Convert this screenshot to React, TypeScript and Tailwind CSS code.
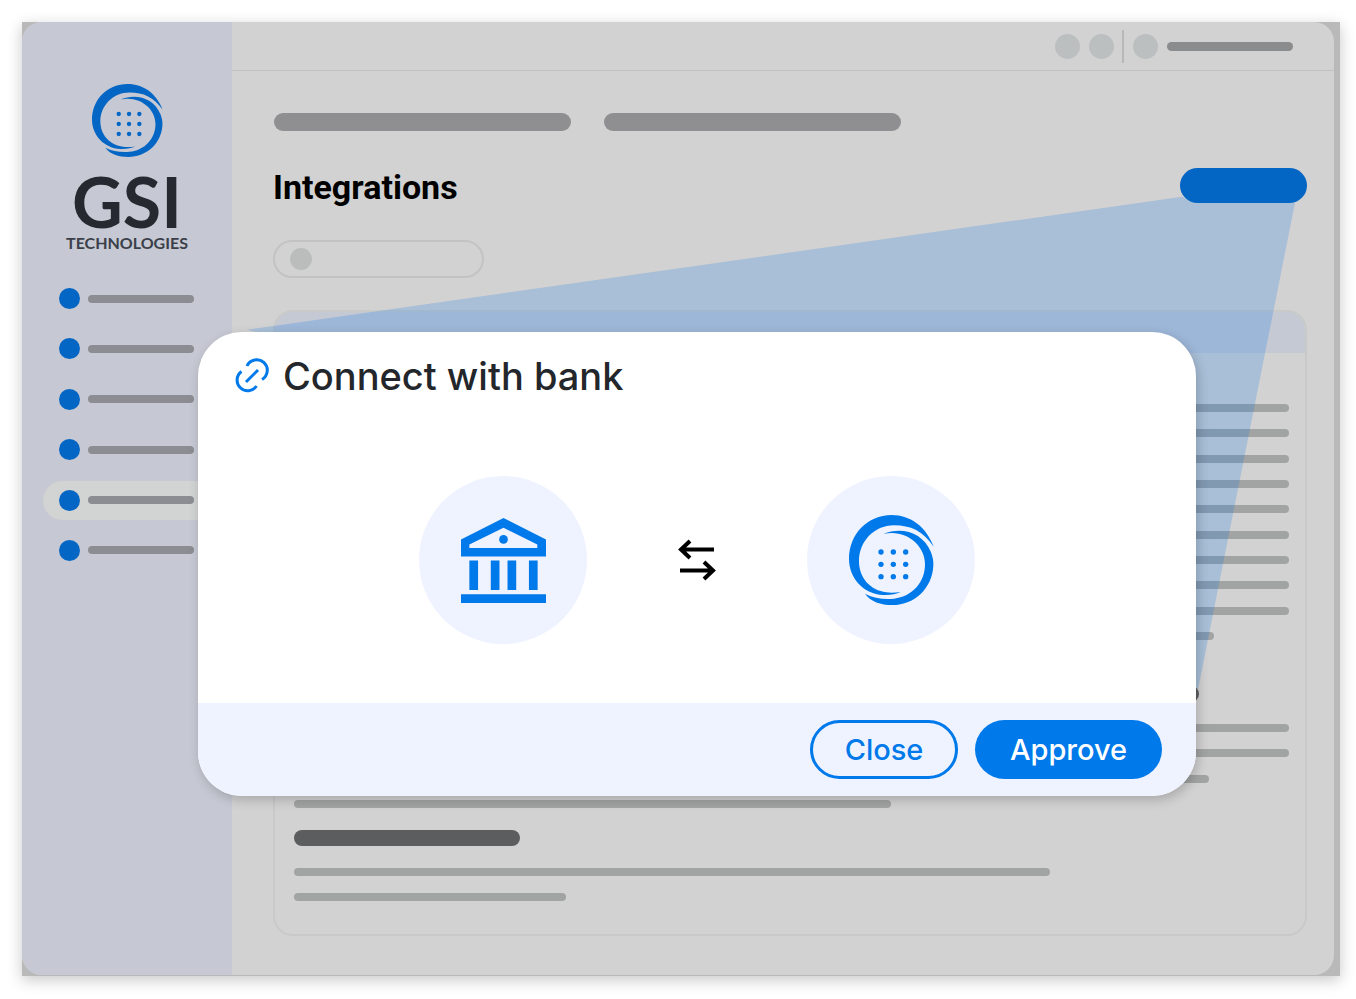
import React from 'react';

const SwirlLogo: React.FC<{ className?: string }> = ({ className }) => (
  <svg viewBox="0 0 255 270" preserveAspectRatio="none" fill="currentColor" className={className} aria-hidden="true">
    <path d="M254 95C232 36 185 0 128 0C55 0 0 58 0 132C0 190 45 238 102 240C122 241 142 238 155 231C140 233 125 234 112 232C65 226 30 190 30 138C30 80 75 31 135 31C185 31 222 48 254 95Z" />
    <path d="M103 57C158 34 222 52 246 112C251 126 254 138 253 152C250 218 198 270 130 270C95 270 65 260 48 236C75 250 105 254 135 251C190 245 228 202 228 148C228 90 170 42 103 57Z" />
    {[111, 148, 185].map((y) =>
      [96, 133, 170].map((x) => <circle key={`${x}-${y}`} cx={x} cy={y} r="8" />)
    )}
  </svg>
);

const BankIcon: React.FC<{ className?: string }> = ({ className }) => (
  <svg viewBox="0 0 254 254" fill="currentColor" className={className} aria-hidden="true">
    <path fillRule="evenodd" d="M0 64L127 0L254 64V115H0ZM25 90H228V79L127 29L25 79Z" />
    <circle cx="127" cy="64" r="13" />
    <path d="M25 127H51V215H25ZM89 127H115V215H89ZM139 127H165V215H139ZM203 127H229V215H203ZM0 228H254V254H0Z" />
  </svg>
);

const LinkIcon: React.FC<{ className?: string }> = ({ className }) => (
  <svg viewBox="0 0 36 36" fill="none" stroke="currentColor" strokeWidth="3" className={className} aria-hidden="true">
    <path d="M13 8A10.6 10.6 0 1 1 28 21.5" />
    <path d="M22.5 28A10.6 10.6 0 1 1 7.5 13.5" />
    <path d="M12 24L24 12" />
  </svg>
);

const SwapIcon: React.FC<{ className?: string }> = ({ className }) => (
  <svg viewBox="0 0 38 42" fill="none" stroke="currentColor" strokeWidth="4" className={className} aria-hidden="true">
    <path d="M36 10.5H3M12 2L3 10.5L12 19" />
    <path d="M2 31.5H35M26 23L35 31.5L26 40" />
  </svg>
);

const TextLine: React.FC<{ width?: string }> = ({ width = 'w-full' }) => (
  <div className={`h-2 rounded-full bg-[#a2a3a3] ${width}`}></div>
);

const Sidebar: React.FC = () => (
  <aside className="w-[210px] shrink-0 bg-[#c6c9d3] pt-[62px]">
    <div className="flex flex-col items-center">
      <SwirlLogo className="w-[71px] h-[73px] text-[#0466c4]" />
      <div className="mt-[10px] font-['Lato',sans-serif] font-bold text-[70px] leading-[68px] text-[#262a30]">GSI</div>
      <div className="font-['Lato',sans-serif] font-bold text-base leading-4 text-[#3b3f4a]">TECHNOLOGIES</div>
    </div>

    <nav className="mt-7 ml-[21px] h-[291px] flex flex-col justify-between">
      {[0, 1, 2, 3, 4, 5].map((i) => (
        <a
          key={i}
          href="#"
          aria-label={`Menu item ${i + 1}`}
          className={`h-[39px] pl-4 flex items-center gap-2 rounded-l-full ${i === 4 ? 'bg-[#d2d3d3]' : ''}`}
        >
          <span className="w-[21px] h-[21px] rounded-full bg-[#0466c4]"></span>
          <span className="w-[106px] h-2 rounded-full bg-[#8b8d92]"></span>
        </a>
      ))}
    </nav>
  </aside>
);

const TopBar: React.FC = () => (
  <header className="h-[49px] pr-[41px] flex items-center justify-end border-b border-[#bfc0c0]">
    <span className="w-[25px] h-[25px] rounded-full bg-[#bcbfc0]"></span>
    <span className="ml-[9px] w-[25px] h-[25px] rounded-full bg-[#bcbfc0]"></span>
    <span className="ml-2 w-0.5 h-[33px] bg-[#b7b8b8]"></span>
    <span className="ml-[9px] w-[25px] h-[25px] rounded-full bg-[#bcbfc0]"></span>
    <span className="ml-[9px] w-[126px] h-[9px] rounded-full bg-[#8b8c8d]"></span>
  </header>
);

const ContentCard: React.FC = () => (
  <div className="mt-8 rounded-[20px] border-2 border-[#c8caca] overflow-hidden">
    <div className="h-[41px] bg-[#c5c9d4]"></div>
    <div className="pl-[19px] pr-4 pt-[51px] pb-[33px]">
      <div className="h-[236px] flex flex-col justify-between">
        {Array.from({ length: 9 }, (_, i) => <TextLine key={i} />)}
        <TextLine width="w-[92.5%]" />
      </div>
      <div className="mt-[46px] h-4 w-[91%] rounded-full bg-[#5c5d5f]"></div>
      <div className="mt-[22px] h-[84px] flex flex-col justify-between">
        <TextLine />
        <TextLine />
        <TextLine width="w-[92%]" />
        <TextLine width="w-[60%]" />
      </div>
      <div className="mt-[22px] h-4 w-[226px] rounded-full bg-[#5c5d5f]"></div>
      <div className="mt-[22px] h-[33px] flex flex-col justify-between">
        <TextLine width="w-[76%]" />
        <TextLine width="w-[272px]" />
      </div>
    </div>
  </div>
);

const ConnectDialog: React.FC = () => (
  <section
    role="dialog"
    aria-labelledby="connect-title"
    className="absolute top-[310px] left-[176px] right-[144px] rounded-[44px] bg-white overflow-hidden font-['Inter',sans-serif] shadow-[2px_4px_12px_rgba(0,0,0,0.2)]"
  >
    <div className="pt-5 pl-9 flex items-center gap-[13px]">
      <LinkIcon className="w-9 h-9 text-[#0079ea]" />
      <h2 id="connect-title" className="text-[38px] leading-[48px] font-medium text-[#23262a]">Connect with bank</h2>
    </div>

    <div className="pt-[76px] pb-[59px] flex items-center justify-center gap-[91px]">
      <div className="w-[168px] h-[168px] rounded-full bg-[#eff3ff] flex items-center justify-center">
        <BankIcon className="w-[85px] h-[85px] text-[#0079ea]" />
      </div>
      <SwapIcon className="w-[38px] h-[42px] text-black" />
      <div className="w-[168px] h-[168px] rounded-full bg-[#eff3ff] flex items-center justify-center">
        <SwirlLogo className="w-[85px] h-[90px] text-[#0079ea]" />
      </div>
    </div>

    <div className="h-[93px] pr-[34px] flex items-center justify-end gap-[17px] bg-[#eff3ff]">
      <button type="button" className="w-[148px] h-[59px] rounded-full border-[3px] border-[#0079ea] text-[29px] font-medium text-[#0079ea]">
        Close
      </button>
      <button type="button" className="w-[187px] h-[59px] rounded-full bg-[#0079ea] text-[29px] font-medium text-white">
        Approve
      </button>
    </div>
  </section>
);

const App: React.FC = () => {
  return (
    <div className="min-h-screen bg-white pt-[22px] pb-[22px] pl-[22px] pr-4">
      <div className="relative bg-[#b9b9b9] pr-1.5 pb-px shadow-[0_4px_14px_rgba(0,0,0,0.22)]">
        <div className="flex rounded-[20px] overflow-hidden bg-[#d2d2d2]">
          <Sidebar />
          <div className="flex-1 min-w-0">
            <TopBar />
            <main className="pt-[42px] pl-[41px] pr-[27px] pb-[39px]">
              <div className="flex gap-[33px] pl-px">
                <div className="w-[297px] h-[18px] rounded-full bg-[#8f8f92]"></div>
                <div className="w-[297px] h-[18px] rounded-full bg-[#8f8f92]"></div>
              </div>

              <div className="mt-[37px] flex items-start justify-between">
                <h1 className="font-['Roboto',sans-serif] font-bold text-[34px] leading-[38px] text-black">
                  Integrations
                </h1>
                <button type="button" aria-label="Connect" className="w-[127px] h-[35px] rounded-full bg-[#0466c4]"></button>
              </div>

              <div className="mt-[34px] w-[211px] h-[38px] pl-[15px] flex items-center rounded-full border-2 border-[#c2c4c4]">
                <span className="w-[22px] h-[22px] rounded-full bg-[#bbbdbd]"></span>
              </div>

              <ContentCard />
            </main>
          </div>
        </div>

        {/* Beam from the button to the dialog */}
        <svg
          viewBox="0 0 1318 955"
          preserveAspectRatio="none"
          className="absolute inset-0 w-full h-full pointer-events-none"
          aria-hidden="true"
        >
          <path d="M225 308L1160 175L1172 181H1273L1176 668L1000 500Z" fill="#0073eb" fillOpacity="0.2" />
        </svg>

        <ConnectDialog />
      </div>
    </div>
  );
};

export default App;
